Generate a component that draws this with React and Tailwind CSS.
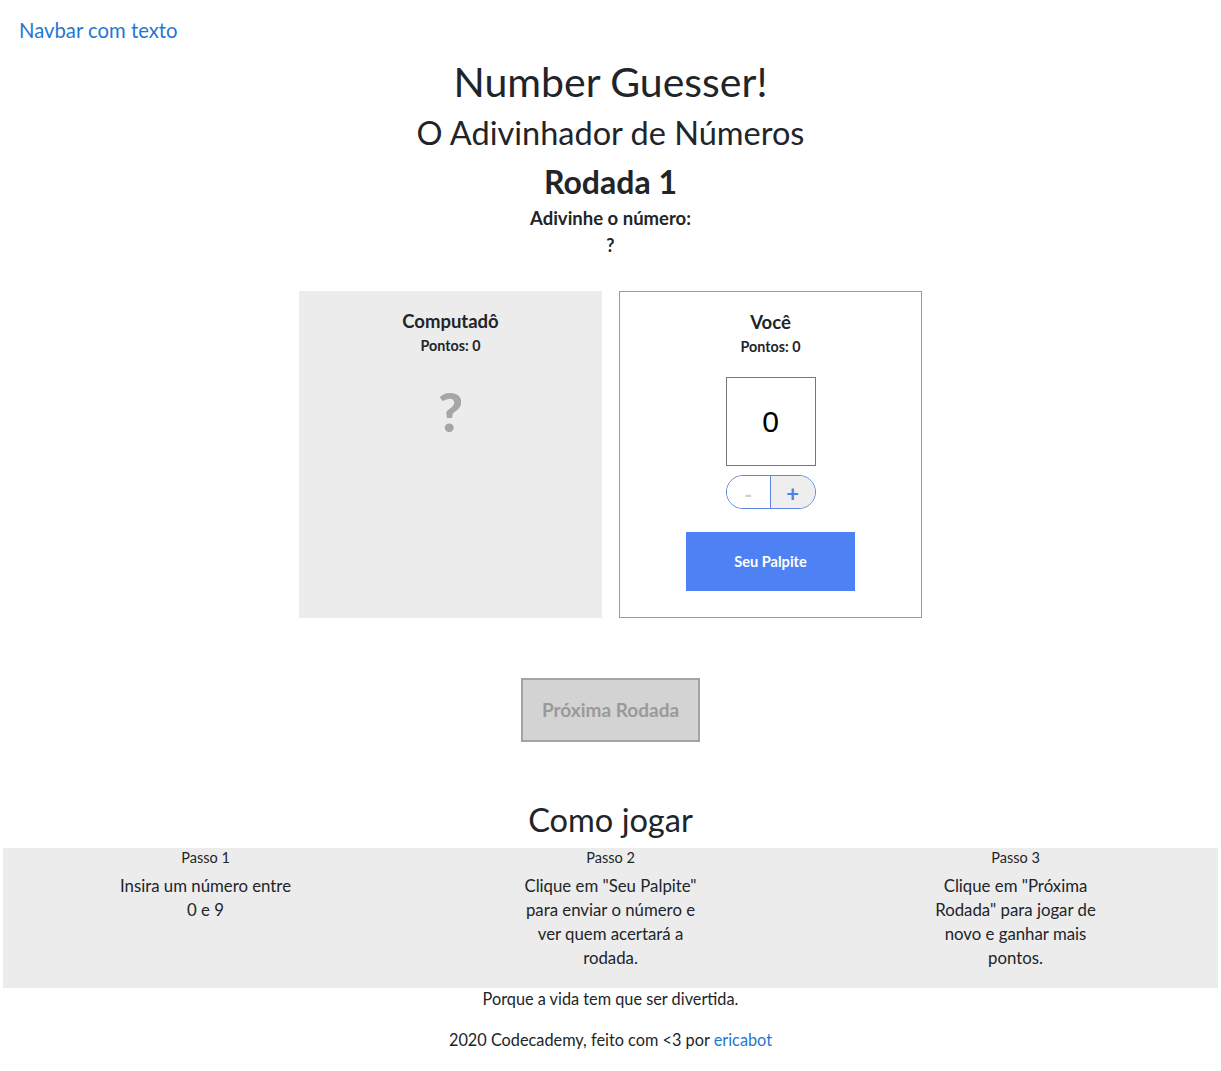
import React, { useState } from "react";

const steps = [
  { title: "Passo 1", text: "Insira um número entre 0 e 9" },
  { title: "Passo 2", text: 'Clique em "Seu Palpite" para enviar o número e ver quem acertará a rodada.' },
  { title: "Passo 3", text: 'Clique em "Próxima Rodada" para jogar de novo e ganhar mais pontos.' },
];

export default function App() {
  const [guess, setGuess] = useState(0);

  return (
    <div className="min-h-[1071px] bg-white text-[#212529] font-['Lato','Noto_Sans',sans-serif]">
      <nav className="px-[19px] pt-[18px] h-[44px]">
        <a className="text-[20.3px] leading-[24px] text-[#1f78d1]">Navbar com texto</a>
      </nav>

      <header className="flex flex-col items-center">
        <h1 className="text-[41px] leading-[48px] mt-[14px]">Number Guesser!</h1>
        <h2 className="text-[32.5px] leading-[40px] mt-[7px]">O Adivinhador de Números</h2>
        <h3 className="text-[32px] leading-[36px] font-bold mt-[11px]">Rodada 1</h3>
        <p className="text-[18.5px] leading-[22px] font-bold mt-[7px]">Adivinhe o número:</p>
        <p className="text-[18px] leading-[22px] font-bold mt-[5px]">?</p>
      </header>

      <section className="flex justify-center gap-[17px] mt-[35px]">
        <div className="w-[303px] h-[327px] bg-[#ececec] flex flex-col items-center pt-[19px]">
          <h4 className="text-[18.5px] leading-[22px] font-bold">Computadô</h4>
          <p className="text-[14.3px] leading-[18px] font-bold mt-[5px]">Pontos: 0</p>
          <div className="text-[54px] leading-[56px] font-black text-[#a6a6a6] mt-[29px]">?</div>
        </div>

        <div className="w-[303px] h-[327px] border border-[#9a9a9a] flex flex-col items-center pt-[19px]">
          <h4 className="text-[18.5px] leading-[22px] font-bold">Você</h4>
          <p className="text-[14.3px] leading-[18px] font-bold mt-[5px]">Pontos: 0</p>
          <div className="w-[90px] h-[89px] border border-[#777] mt-[21px] flex items-center justify-center text-[30px] text-black font-['Liberation_Sans',sans-serif]">
            {guess}
          </div>
          <div className="flex w-[90px] h-[34px] mt-[9px] rounded-full border border-[#5b86e0] overflow-hidden">
            <button
              onClick={() => setGuess(Math.max(0, guess - 1))}
              className="flex-1 bg-white text-[#cfcfcf] text-[20px] font-bold leading-none pt-[3px]"
            >
              -
            </button>
            <button
              onClick={() => setGuess(Math.min(9, guess + 1))}
              className="flex-1 bg-[#eeeeee] border-l border-[#5b86e0] text-[#4e80e6] text-[22px] font-bold leading-none pt-[3px]"
            >
              +
            </button>
          </div>
          <button className="w-[169px] h-[59px] mt-[23px] bg-[#4e81f3] text-white text-[14.6px] font-bold">
            Seu Palpite
          </button>
        </div>
      </section>

      <div className="flex justify-center mt-[60px]">
        <button className="w-[179px] h-[64px] bg-[#d3d3d3] border-2 border-[#a3a3a3] text-[#9a9a9a] text-[19px] font-bold">
          Próxima Rodada
        </button>
      </div>

      <h2 className="text-center text-[32.6px] leading-[40px] mt-[58px]">Como jogar</h2>

      <section className="mx-[3px] mt-[8px] h-[140px] bg-[#ececec] grid grid-cols-3">
        {steps.map((s) => (
          <div key={s.title} className="flex flex-col items-center pt-[1px]">
            <p className="text-[14.5px] leading-[18px]">{s.title}</p>
            <p className="w-[182px] text-center text-[16.8px] leading-[24px] mt-[7px]">{s.text}</p>
          </div>
        ))}
      </section>

      <footer className="text-center text-[16.3px] leading-[22px]">
        <p className="mt-[0px]">Porque a vida tem que ser divertida.</p>
        <p className="mt-[19px]">
          2020 Codecademy, feito com &lt;3 por <a className="text-[#1f78d1]">ericabot</a>
        </p>
      </footer>
    </div>
  );
}
